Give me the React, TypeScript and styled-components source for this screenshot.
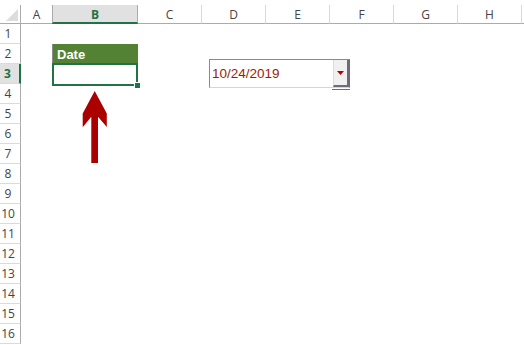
import React from 'react'
import styled, { createGlobalStyle } from 'styled-components'

const GlobalStyle = createGlobalStyle`
  html, body {
    margin: 0;
    padding: 0;
    background: #ffffff;
    overflow: hidden;
  }
`

const columns = ['A', 'B', 'C', 'D', 'E', 'F', 'G', 'H', '']
const rows = Array.from({ length: 16 }, (_, i) => i + 1)
const activeCol = 'B'
const activeRow = 3

const App = () => {
  return (
    <Page>
      <GlobalStyle />
      <Sheet>
        <Corner>
          <svg width="14" height="14" viewBox="0 0 14 14">
            <polygon points="13,1 13,13 1,13" fill="#dcdcdc" />
          </svg>
        </Corner>
        {columns.map((c, i) => (
          <ColHeader key={'h' + i} $active={c === activeCol} $last={c === ''}>
            {c}
          </ColHeader>
        ))}
        {rows.map((r) => (
          <React.Fragment key={r}>
            <RowHeader $active={r === activeRow}>{r}</RowHeader>
            {columns.map((c, i) => {
              if (r === 2 && c === 'B') return <TitleCell key={c + r}>Date</TitleCell>
              if (r === activeRow && c === activeCol)
                return (
                  <Cell key={c + r}>
                    <Selection>
                      <FillHandle />
                    </Selection>
                  </Cell>
                )
              return <Cell key={c + r + i} />
            })}
          </React.Fragment>
        ))}

        <Combo>
          <ComboText>10/24/2019</ComboText>
          <ComboButton>
            <svg width="7" height="4" viewBox="0 0 7 4">
              <polygon points="0,0 7,0 3.5,4" fill="#b00000" />
            </svg>
          </ComboButton>
          <ComboUnderline />
        </Combo>

        <Arrow width="26" height="74" viewBox="0 0 26 74">
          <polygon
            points="12.7,0 24.8,22.5 24.8,36 16,25.8 16,72 9.3,72 9.3,25.8 0.7,36.2 0.7,22.5"
            fill="#ab0000"
          />
        </Arrow>
      </Sheet>
    </Page>
  )
}

export default App

const Page = styled.div`
  width: 524px;
  height: 345px;
  padding-top: 5px;
  box-sizing: border-box;
  background: #ffffff;
  overflow: hidden;
`

const Sheet = styled.div`
  position: relative;
  display: grid;
  grid-template-columns: 21px 32px 85px 64px 64px 64px 64px 64px 64px 10px;
  grid-template-rows: 19px repeat(16, 20px);
  font-family: "Open Sans", "Liberation Sans", sans-serif;
`

const Corner = styled.div`
  box-sizing: border-box;
  border-right: 1px solid #ababab;
  border-bottom: 1px solid #ababab;
  display: flex;
  align-items: flex-end;
  justify-content: flex-end;
  padding: 0 1px 1px 0;
`

const ColHeader = styled.div<{ $active?: boolean; $last?: boolean }>`
  box-sizing: border-box;
  display: flex;
  align-items: center;
  justify-content: center;
  font-size: 12px;
  padding-top: 1px;
  color: ${(p) => (p.$active ? '#217346' : '#444444')};
  font-weight: ${(p) => (p.$active ? 700 : 400)};
  background: ${(p) => (p.$active ? '#e1e1e1' : '#ffffff')};
  border-right: ${(p) => (p.$last ? 'none' : p.$active ? '1px solid #ababab' : '1px solid #d8d8d8')};
  border-left: ${(p) => (p.$active ? '1px solid #ababab' : 'none')};
  margin-left: ${(p) => (p.$active ? '-1px' : '0')};
  border-bottom: ${(p) => (p.$active ? '2px solid #217346' : '1px solid #ababab')};
`

const RowHeader = styled.div<{ $active?: boolean }>`
  box-sizing: border-box;
  display: flex;
  align-items: center;
  justify-content: center;
  padding-right: 4px;
  font-size: 12px;
  color: ${(p) => (p.$active ? '#217346' : '#444444')};
  font-weight: ${(p) => (p.$active ? 700 : 400)};
  background: ${(p) => (p.$active ? '#e1e1e1' : '#ffffff')};
  border-right: ${(p) => (p.$active ? '2px solid #217346' : '1px solid #ababab')};
  border-bottom: 1px solid #dadada;
`

const Cell = styled.div`
  position: relative;
`

const TitleCell = styled.div`
  box-sizing: border-box;
  background: #548235;
  color: #ffffff;
  font-family: "Liberation Sans", Arial, sans-serif;
  font-weight: 700;
  font-size: 13px;
  padding: 3px 0 0 4px;
  border-left: 1px solid #8a8a8a;
  margin-left: -1px;
`

const Selection = styled.div`
  position: absolute;
  z-index: 2;
  top: -1px;
  left: -1px;
  right: 0px;
  bottom: -2px;
  border: 2px solid #217346;
`

const FillHandle = styled.div`
  position: absolute;
  right: -5px;
  bottom: -5px;
  width: 5px;
  height: 5px;
  background: #217346;
  border: 1px solid #ffffff;
`

const Combo = styled.div`
  position: absolute;
  z-index: 3;
  left: 209px;
  top: 54px;
  width: 141px;
  height: 29px;
  box-sizing: border-box;
  display: flex;
  align-items: stretch;
  background: #ffffff;
  border-top: 1px solid #8a8a8a;
  border-left: 1px solid #8a8a8a;
  border-right: 1px solid #6e6a78;
  border-bottom: 1px solid #d6d6d6;
`

const ComboText = styled.div`
  flex: 1;
  display: flex;
  align-items: center;
  padding-left: 2px;
  font-family: "Liberation Sans", Arial, sans-serif;
  font-size: 13.5px;
  color: #a01a0a;
`

const ComboButton = styled.div`
  width: 16px;
  box-sizing: border-box;
  display: flex;
  align-items: center;
  justify-content: center;
  background: #f0f0f0;
  border-left: 1px solid #dcdcdc;
  border-right: 2px solid #6e6a78;
  border-bottom: 2px solid #6e6a78;
`

const ComboUnderline = styled.div`
  position: absolute;
  left: 122px;
  right: -1px;
  bottom: -3px;
  height: 1px;
  background: #6e6a78;
`

const Arrow = styled.svg`
  position: absolute;
  z-index: 3;
  left: 82px;
  top: 86px;
`
